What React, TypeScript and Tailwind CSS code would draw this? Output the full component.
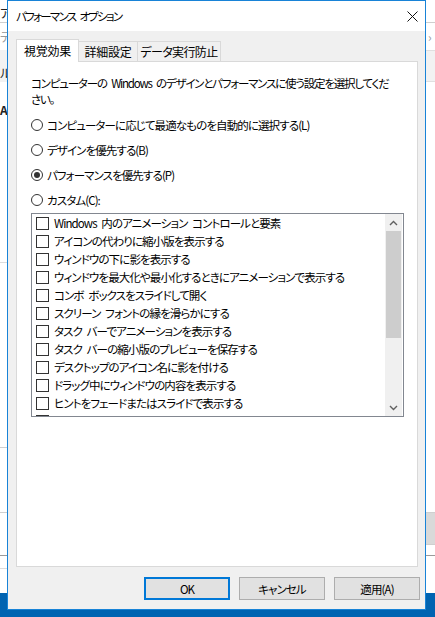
const items = [
  'Windows 内のアニメーション コントロールと要素',
  'アイコンの代わりに縮小版を表示する',
  'ウィンドウの下に影を表示する',
  'ウィンドウを最大化や最小化するときにアニメーションで表示する',
  'コンボ ボックスをスライドして開く',
  'スクリーン フォントの縁を滑らかにする',
  'タスク バーでアニメーションを表示する',
  'タスク バーの縮小版のプレビューを保存する',
  'デスクトップのアイコン名に影を付ける',
  'ドラッグ中にウィンドウの内容を表示する',
  'ヒントをフェードまたはスライドで表示する',
  'ピークを有効にする',
  'マウス ポインターの下に影を表示する',
]

const radios = [
  { label: 'コンピューターに応じて最適なものを自動的に選択する(L)', on: false },
  { label: 'デザインを優先する(B)', on: false },
  { label: 'パフォーマンスを優先する(P)', on: true },
  { label: 'カスタム(C):', on: false },
]

const Chevron = ({ up }: { up?: boolean }): React.ReactElement => (
  <svg width="9" height="6" viewBox="0 0 9 6">
    <path d={up ? 'M1 5L4.5 1.5L8 5' : 'M1 1L4.5 4.5L8 1'} stroke="#606060" strokeWidth="1.4" fill="none" />
  </svg>
)

const Radio = ({ on }: { on: boolean }): React.ReactElement => (
  <span className="flex h-[12px] w-[12px] shrink-0 items-center justify-center rounded-full border border-[#333] bg-white">
    {on && <span className="h-[6px] w-[6px] rounded-full bg-[#333]" />}
  </span>
)

const Backdrop = (): React.ReactElement => (
  <>
    {/* bits of the window behind the dialog */}
    <div className="absolute left-0 top-[22px] h-px w-[7px] bg-[#cfcfcf]" />
    <div className="absolute left-0 top-[6px] text-[12px] leading-[14px] text-[#222]">ア</div>
    <div className="absolute left-0 top-[30px] text-[12px] leading-[14px] text-[#999]">テ</div>
    <div className="absolute left-0 top-[50px] h-[32px] w-[7px] bg-[#f2f2f2]" />
    <div className="absolute left-0 top-[66px] text-[12px] leading-[14px] text-[#222]">ル</div>
    <div className="absolute left-0 top-[103px] text-[12px] leading-[14px] font-bold text-[#222]">A</div>
    <div className="absolute left-0 top-[262px] h-px w-[7px] bg-[#dcdcdc]" />
    <div className="absolute left-0 top-[447px] h-px w-[7px] bg-[#cfcfcf]" />
    <div className="absolute left-0 top-[512px] h-px w-[7px] bg-[#cfcfcf]" />
    <div className="absolute left-0 top-[555px] h-px w-[7px] bg-[#9a9a9a]" />
    <div className="absolute left-0 top-[568px] h-px w-[7px] bg-[#dcdcdc]" />
    <div className="absolute left-0 top-[593px] h-[24px] w-[8px] bg-[#0063b1]" />
    <div className="absolute left-[426px] top-[22px] h-px w-[9px] bg-[#cfcfcf]" />
    <div className="absolute left-[428px] top-[30px] text-[12px] leading-[14px] text-[#999]">›</div>
    <div className="absolute left-[426px] top-[50px] h-[32px] w-[9px] border-y border-[#e0e0e0] bg-[#f2f2f2]" />
    <div className="absolute left-[426px] top-[512px] h-[33px] w-[9px] border-y border-[#cfcfcf] bg-[#d9d9d9]" />
    <div className="absolute left-[426px] top-[555px] h-px w-[9px] bg-[#9a9a9a]" />
    <div className="absolute left-[426px] top-[593px] h-[24px] w-[9px] bg-[#0063b1]" />
    <div className="absolute left-0 top-[609px] h-[8px] w-[435px] bg-[#0063b1]" />
  </>
)

const App = (): React.ReactElement => (
  <div className="relative h-[617px] w-[435px] overflow-hidden bg-white font-['Noto_Sans_CJK_JP',sans-serif] text-[11.5px] tracking-[-0.9px] text-black [font-feature-settings:'palt'] [word-spacing:3px]">
    <Backdrop />
    <div className="absolute left-[7px] top-0 flex h-[610px] w-[419px] flex-col border border-[#1883d7] bg-[#f0f0f0]">
      <div className="flex h-[30px] shrink-0 items-center justify-between bg-white pl-[8px] pr-[7px]">
        <span className="leading-[16px] tracking-[-1.7px]">パフォーマンス オプション</span>
        <svg width="11" height="11" viewBox="0 0 11 11">
          <path d="M0.5 0.5L10.5 10.5M10.5 0.5L0.5 10.5" stroke="#111" strokeWidth="1" />
        </svg>
      </div>
      <div className="flex flex-col px-[8px] pt-[8px]">
        <div className="flex h-[22px] items-start pr-[7px] text-[12px] tracking-[-0.2px]">
          <div className="relative z-10 flex h-[23px] w-[63px] items-center justify-center border border-b-0 border-[#d9d9d9] bg-white leading-[16px]">
            視覚効果
          </div>
          <div className="mt-[2px] flex h-[21px] w-[59px] items-center justify-center border border-l-0 border-b-0 border-[#d9d9d9] leading-[16px]">
            詳細設定
          </div>
          <div className="mt-[2px] flex h-[21px] w-[83px] items-center justify-center border border-l-0 border-b-0 border-[#d9d9d9] leading-[16px] tracking-[-0.6px]">
            データ実行防止
          </div>
        </div>
        <div className="mr-[-1px] flex h-[506px] w-[402px] flex-col border border-[#d9d9d9] bg-white pl-[14px]">
          <p className="mt-[13px] whitespace-nowrap leading-[16px] tracking-[-1.2px]">
            コンピューターの Windows のデザインとパフォーマンスに使う設定を選択してくだ
            <br />
            さい。
          </p>
          <div className="mt-[10px] flex flex-col gap-[9px]">
            {radios.map(r => (
              <div key={r.label} className="flex h-[16px] items-center gap-[4px] leading-[16px]">
                <Radio on={r.on} />
                <span className="whitespace-nowrap">{r.label}</span>
              </div>
            ))}
          </div>
          <div className="mt-[5px] flex h-[204px] w-[373px] border border-[#828790] bg-white">
            <div className="flex min-w-0 flex-1 flex-col overflow-hidden">
              {items.map(t => (
                <div key={t} className="flex h-[18px] shrink-0 items-center gap-[5px] pl-[4px] leading-[16px]">
                  <span className="h-[13px] w-[13px] shrink-0 border border-[#333] bg-white" />
                  <span className="whitespace-nowrap">{t}</span>
                </div>
              ))}
            </div>
            <div className="mr-[1px] flex w-[17px] shrink-0 flex-col bg-[#f0f0f0]">
              <div className="flex h-[17px] items-center justify-center">
                <Chevron up />
              </div>
              <div className="mx-[1px] h-[107px] bg-[#cdcdcd]" />
              <div className="flex-1" />
              <div className="flex h-[17px] items-center justify-center">
                <Chevron />
              </div>
            </div>
          </div>
        </div>
      </div>
      <div className="mt-[10px] flex justify-end gap-[9px] pr-[5px]">
        <button className="h-[23px] w-[86px] border-2 border-[#0078d7] bg-[#e1e1e1] leading-[16px]">OK</button>
        <button className="h-[23px] w-[86px] border border-[#adadad] bg-[#e1e1e1] leading-[16px]">キャンセル</button>
        <button className="h-[23px] w-[86px] border border-[#adadad] bg-[#e1e1e1] leading-[16px]">適用(A)</button>
      </div>
    </div>
  </div>
)

export default App
